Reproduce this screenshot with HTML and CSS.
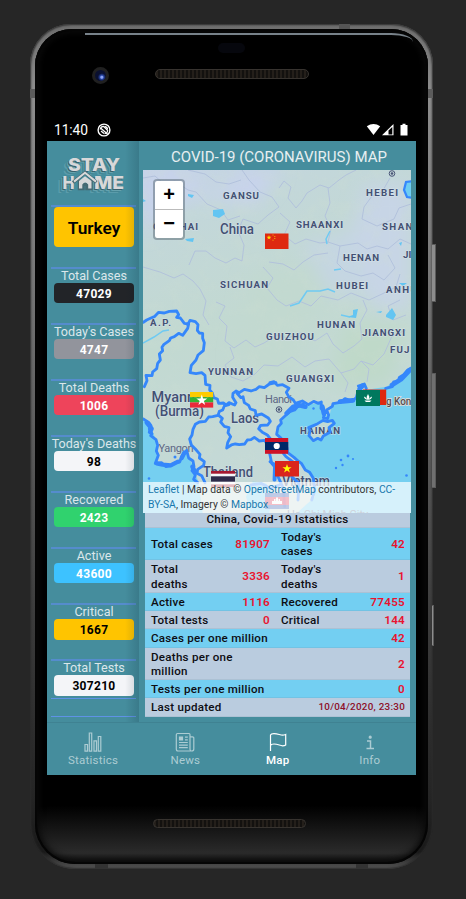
FILE: index.html
```html
<!DOCTYPE html>
<html lang="en">
<head>
<meta charset="utf-8">
<title>Covid-19 Map</title>
<link rel="stylesheet" href="styles.css">
</head>
<body>
<div class="phone">
  <i class="key key-power"></i><i class="key key-volume"></i><i class="key key-low"></i>
  <i class="seam seam-l"></i><i class="seam seam-r"></i><i class="seam seam-t"></i><i class="seam seam-b1"></i><i class="seam seam-b2"></i>
  <div class="body">
    <div class="bezel-top">
      <i class="sensor"></i><i class="camera"></i><i class="speaker"></i>
    </div>
    <div class="status">
      <span class="clock">11:40</span>
      <svg class="s-app" width="14" height="14" viewBox="0 0 14 14"><circle cx="7" cy="7" r="5.900" fill="none" stroke="#fff" stroke-width="1.400"/><path d="M3.200 6.500Q3.500 3.500 6.500 3.300L10.700 7.500Q10.300 10.500 7.500 10.700" fill="none" stroke="#fff" stroke-width="1.200"/><path d="M3.500 5 10.500 11M4 8l3 2.500M7.500 3.500Q10.500 4 10.500 6.500" fill="none" stroke="#fff" stroke-width="1.300"/></svg>
      <svg class="s-right" width="43" height="14" viewBox="0 0 43 14"><path d="M.8 3.200Q7.500-1 14.200 3.200L7.500 12Z" fill="#fff"/><path d="M16 12.300 27.500 1V12.300Z" fill="#fff"/><path d="M22.500 7.500v4h3.800V4z" fill="#000"/><path d="M34.500 2h2V.8h3V2h2v10.500h-7z" fill="#fff"/></svg>
    </div>
    <div class="screen">
      <div class="content">
        <aside class="side">
          <svg class="logo" width="86" height="64" viewBox="51 141 86 64">
            <defs><g id="word">
              <text x="68" y="170.500" textLength="52" lengthAdjust="spacingAndGlyphs">STAY</text>
              <text x="62.500" y="188.500" textLength="12" lengthAdjust="spacingAndGlyphs">H</text>
              <text x="94" y="188.500" textLength="30" lengthAdjust="spacingAndGlyphs">ME</text>
            </g></defs>
            <use href="#word" x="-5" y="4.500" fill="#5a9cab"/>
            <use href="#word" x="-3.500" y="3.200" fill="#438593"/>
            <use href="#word" x="-2" y="2" fill="#65a2ae"/>
            <use href="#word" x="-1" y="1" fill="#38616c"/>
            <use href="#word" fill="#d8d8d9"/>
            <path d="M73 182.500 85 172.700 96.500 182.300M79.500 180V188.500H83V185.500Q85 183 87 185.500V188.500H91V180" fill="none" stroke="#466a73" stroke-width="3.400"/>
            <path d="M74 181.600 85 172.700 96 181.600" fill="none" stroke="#d8d8d9" stroke-width="2"/>
            <path d="M79 181 85 176.300 91.500 181V188.500H88.200V184.500Q85.200 180.500 82.300 184.500V188.500H79Z" fill="#d8d8d9"/>
          </svg>
          <section class="stat stat-main"><b class="pill yellow">Turkey</b></section>
          <section class="stat"><span>Total Cases</span><b class="pill dark">47029</b></section>
          <section class="stat"><span>Today's Cases</span><b class="pill grey">4747</b></section>
          <section class="stat"><span>Total Deaths</span><b class="pill red">1006</b></section>
          <section class="stat"><span>Today's Deaths</span><b class="pill light">98</b></section>
          <section class="stat"><span>Recovered</span><b class="pill green">2423</b></section>
          <section class="stat"><span>Active</span><b class="pill blue">43600</b></section>
          <section class="stat"><span>Critical</span><b class="pill yellow">1667</b></section>
          <section class="stat last"><span>Total Tests</span><b class="pill light">307210</b></section>
          <div class="rule"></div>
          <div class="rule end"></div>
        </aside>
        <main class="main">
          <h1>COVID-19 (CORONAVIRUS) MAP</h1>
          <div class="map">
            <svg class="tiles" width="268" height="343" viewBox="143 170 268 343">
              <defs>
                <linearGradient id="land" x1="0" y1="0" x2=".25" y2="1"><stop offset="0" stop-color="#c6d3e9"/><stop offset=".16" stop-color="#c3d7da"/><stop offset=".5" stop-color="#c2d9d1"/><stop offset="1" stop-color="#c5d9d8"/></linearGradient>
                <filter id="soft" x="-50%" y="-50%" width="200%" height="200%"><feGaussianBlur stdDeviation="9"/></filter>
                <filter id="relief" x="0" y="0" width="100%" height="100%"><feTurbulence type="fractalNoise" baseFrequency=".06" numOctaves="4" seed="8"/><feColorMatrix values="0 0 0 0 .62  0 0 0 0 .73  0 0 0 0 .64  1.5 0 0 0 -.72"/></filter>
              </defs>
              <rect x="143" y="170" width="268" height="343" fill="url(#land)"/>
              <g filter="url(#soft)">
                <path d="M143 170H180L215 195 240 170H280L255 205 190 195 143 235Z" fill="#c8d3ec"/>
                <path d="M365 185H411V310H380L340 275Z" fill="#c7d5e6"/>
                <path d="M300 245 350 230 370 290 335 300Z" fill="#c5d6e2"/>
                <path d="M250 275 320 265 290 400 235 360Z" fill="#c2d9d0"/>
                <path d="M345 325H405L390 385H330Z" fill="#bfd9c9"/>
              </g>
              <rect x="143" y="170" width="268" height="343" filter="url(#relief)" opacity=".4"/>
              <!-- province borders -->
              <g fill="none" stroke="#b0bfdb" stroke-width=".9" stroke-linejoin="round">
                <path d="M143 267 160 272 174 278 183 274 193 281 200 289 206 301 203 315 209 325M189 265 195 251 206 251 215 258 226 263 235 258 242 261 244 245 238 231 243 219 258 224 268 215 279 207 272 197 260 192 249 180 242 170"/>
                <path d="M143 178 155 176 164 184 175 181 188 190 196 192 207 204 221 210 228 220 240 216M188 170 205 174 216 182 229 184 241 180"/>
                <path d="M279 188 284 181 291 187 288 198 296 208 302 201 307 193 320 185 329 188 339 180 346 175 356 170M328 188 330 203 325 216 331 229 328 242 340 246 358 243 367 249 377 246 388 249 400 239 411 244"/>
                <path d="M280 213 290 222 284 235 295 244 306 239 320 243 328 242M269 262 283 264 294 270 303 262 314 255 328 253M340 246 337 263 345 271 361 276 373 273 384 280 395 268 388 255"/>
                <path d="M263 267 273 278 267 288 277 300 286 306 299 301 311 306 321 296 338 300 351 293 369 300 382 294 396 287 400 274"/>
                <path d="M216 302 225 306 219 318 227 326 225 341 234 348 246 340 255 347 264 343 277 335 288 338 301 333 315 341 327 333 333 344 343 353 354 346 362 339 360 323 367 310 363 300"/>
                <path d="M230 347 234 358 225 365 231 377 243 381 255 374 264 365 278 366 292 357 305 367 315 361 329 359 341 373 354 369 361 361 373 365 384 354 392 336 406 330"/>
                <path d="M341 373 348 383 345 392M361 361 369 369 367 382M390 178 382 192 372 196 364 207 362 219 377 226 394 219 399 208 411 204M400 300 388 306 393 320 406 315"/>
              </g>
              <!-- lakes and rivers -->
              <g fill="#63c5f2"><path d="M213 210 223 209 225 214 219 218 213 216Z"/><path d="M188 194 194 195 192 198 188 196ZM185 239 194 238 193 242 187 241ZM143 199 146 201 143 202Z"/><path d="M386 315 392 308 396 315 393 320 386 317ZM353 310 358 309 356 318 347 317 353 315ZM376 312 382 311 381 313ZM399 283 407 283 403 286ZM399 243 402 242 401 246Z"/></g>
              <g fill="none" stroke="#6fcaf2" stroke-width="1.500"><path d="M290 306 299 303 307 291 320 291 328 289 335 292M330 231 326 239 327 244M334 270 341 269M143 343 154 337 163 331 169 330M341 315 350 317"/></g>
              <!-- sea -->
              <g transform="translate(270 310) scale(.33333)">
                <path d="M425 175 395 200 350 230 285 240 255 268 215 275 185 285 178 322 155 305 150 282 100 280 75 295 50 310 35 335 20 375 40 410 65 440 95 465 130 510 135 560 80 610H425Z" fill="#75cff0"/>
                <path d="M145 338 180 335 190 342 175 370 155 388 130 390 118 372 125 350Z" fill="#c2d9d3"/>
              </g>
              <g transform="translate(136 310) scale(.33333)">
                <path d="M20 325 42 345 60 390 64 458 100 468 125 455 150 425 172 470 188 520 200 610H20Z" fill="#75cff0"/>
                <path d="M330 560 350 515 390 520 410 545 400 610H345Z" fill="#75cff0"/>
              </g>
              <path d="M413 181 406 182 404 190 407 197 413 198" fill="#6ecdf2" stroke="#3587fb" stroke-width="2.200"/>
              <!-- place names -->
              <g class="region">
                <text x="223" y="199" textLength="36">GANSU</text><text x="366" y="195.500" textLength="32">HEBEI</text>
                <text x="296" y="228" textLength="47">SHAANXI</text><text x="382" y="229.500" textLength="38">SHANX</text>
                <text x="153" y="229.500" textLength="45">QINGHAI</text><text x="343" y="261" textLength="36">HENAN</text>
                <text x="220" y="288" textLength="48">SICHUAN</text><text x="336" y="289" textLength="32">HUBEI</text>
                <text x="386" y="292.500" textLength="31">ANHU</text><text x="403" y="258">JIA</text>
                <text x="150" y="326" textLength="21">A.P.</text><text x="317" y="327.500" textLength="38">HUNAN</text>
                <text x="362" y="336" textLength="43">JIANGXI</text><text x="266" y="339.500" textLength="48">GUIZHOU</text>
                <text x="390" y="353" textLength="39">FUJIAN</text><text x="208" y="374.500" textLength="45">YUNNAN</text>
                <text x="286" y="382" textLength="48">GUANGXI</text><text x="300" y="433.500" textLength="40">HAINAN</text>
              </g>
              <g class="country">
                <text x="220" y="234" textLength="34" lengthAdjust="spacingAndGlyphs">China</text><text x="151.500" y="401.500" textLength="61" lengthAdjust="spacingAndGlyphs">Myanmar</text>
                <text x="155" y="416" textLength="49" lengthAdjust="spacingAndGlyphs">(Burma)</text><text x="231" y="423" textLength="28" lengthAdjust="spacingAndGlyphs">Laos</text>
                <text x="203" y="477" textLength="50" lengthAdjust="spacingAndGlyphs">Thailand</text><text x="282" y="486" textLength="48" lengthAdjust="spacingAndGlyphs">Vietnam</text>
              </g>
              <g class="town">
                <text x="158.500" y="451.500" textLength="35">Yangon</text><text x="265" y="402.500" textLength="27">Hanoi</text>
                <text class="hk" x="386" y="404.500" textLength="31" lengthAdjust="spacingAndGlyphs">g Kong</text><text x="287" y="518">Ho Chi Minh City</text>
              </g>
              <g fill="none" stroke="#4a5577" stroke-width="1"><circle cx="279" cy="409.500" r="2.800"/><circle cx="392" cy="173.500" r="2.800"/></g>
              <g fill="#4a5577"><circle cx="279" cy="409.500" r="1.300"/><circle cx="392" cy="173.500" r="1.300"/></g>
              <!-- national outlines -->
              <g transform="translate(136 310) scale(.33333)" class="outline">
                <path d="M22 37 32 30 45 24 55 20 68 7 85 9 100 4 122 3 128 14 122 22 133 24 145 40 158 42 155 55 148 65 140 76 128 70 115 80 104 84 100 92 83 104 78 112 80 122 70 132 73 150 65 160 62 176 50 186 48 197 30 196 33 212 25 230"/>
                <path d="M155 44 162 31 178 35 186 44 184 61 190 69 200 70 200 85 205 98 202 122 186 135 180 150 166 166 162 188 180 191 197 188 207 196 209 223 222 226 221 240 229 249 233 263 244 267 248 280 262 279 270 285 279 278 296 285 300 278 290 262 291 250 300 243 310 248 325 238 345 243 360 238 370 230 385 233 400 222 420 218"/>
                <path d="M279 284 265 288 260 300 250 304 246 316 230 320 218 321 208 334 190 336 178 343 171 358 168 375 161 387 166 405 178 417 192 433 190 444 205 455 203 466 185 478 183 490 197 497 207 518"/>
                <path d="M248 316 259 325 254 336 265 349 279 353 276 368 284 380 275 398 272 414 286 405 298 402 310 404 326 402 334 390 345 389 355 382 370 393 386 391 395 405 402 435 407 460 420 475 417 510"/>
                <path d="M303 250 315 263 321 260 325 278 338 286 343 297 358 302 360 316 377 312 397 324 403 334 395 345 374 346 368 356 379 367 394 375 407 391 428 410"/>
                <path d="M22 327 38 337 45 347 40 357 48 371 44 377 60 389 65 406 61 423 67 436 58 460 76 458 90 470 105 467 119 458 131 456 139 436 152 421 158 444 171 453 174 470 168 482 178 495 173 508 185 518"/>
                <path d="M32 338 47 356 42 366M62 460 80 464 104 466 126 455M145 428 137 444M169 470 178 487" stroke-width="13"/>
                <path d="M420 472 426 500 442 535 446 590M345 525 375 520 402 535 430 525" />
              </g>
              <g transform="translate(270 310) scale(.33333)" class="outline">
                <path d="M0 218 12 215 22 226 38 224 57 235 49 247 56 260 70 270 76 280 97 273 115 284 131 274 145 280 154 276 153 295 166 306 160 323 173 326 176 315 170 300 187 289 189 281 211 277 225 266 246 273 259 263 263 247 270 235 265 228 283 222 289 236"/>
                <path d="M347 235 367 230 371 216 386 214 388 202 401 194 413 180 426 173"/>
                <path d="M100 282 83 290 74 300 59 305 49 314 32 330 34 340 24 351 20 373 33 384 35 398 51 413 53 428 72 442 84 453 94 460 106 480 119 487 130 505 134 543 125 570"/>
                <path d="M143 341 159 331 173 335 187 331 193 340 177 353 180 367 160 378 153 390 143 385 130 392 117 377 120 362 116 353 132 346Z"/>
                <path d="M50 310 70 290 88 286 106 290M157 290 162 311M210 275 249 271M366 225 393 208 419 181M269 237 278 227" stroke-width="14"/>
                <path d="M0 455 14 463 13 482 12 510M40 430 48 440 75 460M65 500 87 520 84 570" />
              </g>
              <g fill="#3587fb"><circle cx="348" cy="456" r="1.400"/><circle cx="353" cy="459" r="1.100"/><circle cx="341" cy="460" r="1.300"/><circle cx="342.500" cy="465" r="1.200"/><circle cx="336" cy="468" r="1.200"/><circle cx="406.500" cy="475.500" r="1.300"/><circle cx="313.500" cy="408.500" r="1.200"/><circle cx="149" cy="478.500" r="1.300"/><circle cx="175" cy="457" r="1.500"/></g>
              <!-- flags -->
              <g transform="translate(265 233.500)"><path fill="#de2910" d="M0 0h23.500v15.500H0z"/><path fill="#ffde00" d="m4 1.500.6 1.700 1.800.1-1.400 1.100.5 1.700L4 5.100 2.500 6.100 3 4.400 1.600 3.300l1.800-.1z"/><path d="M7.500 1.500h1M9.300 3h1M9.300 5h1M7.500 6.700h1" stroke="#ffde00" stroke-width=".8"/></g>
              <g transform="translate(190 392)"><path fill="#fecb00" d="M0 0h23.200v5.200H0z"/><path fill="#34b233" d="M0 5.200h23.200v5.200H0z"/><path fill="#ea2839" d="M0 10.400h23.200v5.200H0z"/><path fill="#fff" d="m11.800 2.500 1.300 4h4.200l-3.400 2.500 1.300 4-3.400-2.500-3.400 2.500 1.300-4-3.400-2.500h4.200z"/></g>
              <g transform="translate(265 438)"><path fill="#ce1126" d="M0 0h23.200v15.800H0z"/><path fill="#002868" d="M0 4h23.200v8H0z"/><circle cx="11.700" cy="8" r="3.100" fill="#fff"/></g>
              <g transform="translate(275 461)"><path fill="#da251d" d="M0 0h24v15.500H0z"/><path fill="#ff0" d="m12 3 1.100 3.300h3.500l-2.800 2 1.100 3.300L12 9.600l-2.900 2 1.100-3.300-2.800-2h3.500z"/></g>
              <path fill="#de2910" d="M363 389.500h23.200v15.500H363z"/>
              <g transform="translate(356 390)"><path fill="#00785e" d="M0 0h24v16H0z"/><path fill="#fff" d="M12 4Q14 6.500 12.800 9 15 6.500 16 6.500 16 9.500 12 9.800 8 9.500 8 6.500 9.300 6.700 11.200 9 10 6.500 12 4M8.500 10.500h7L14 12h-4z"/></g>
              <g transform="translate(211 471)"><path fill="#a51931" d="M0 0h24v16H0z"/><path fill="#f4f5f8" d="M0 2.700h24v10.600H0z"/><path fill="#2d2a4a" d="M0 5.300h24v5.400H0z"/></g>
              <g transform="translate(265 493)" opacity=".8"><path fill="#032ea1" d="M0 0h24v16H0z"/><path fill="#e00025" d="M0 4h24v8H0z"/><path fill="#fff" d="M7 11V8h2V6h1.500v2H11V4.500h2V8h.5V6H15v2h2v3z"/></g>
            </svg>
            <div class="zoom"><span>+</span><span>−</span></div>
            <div class="credit"><a>Leaflet</a> | Map data © <a>OpenStreetMap</a> contributors, <a>CC-<br>BY-SA</a>, Imagery © <a>Mapbox</a></div>
          </div>
          <table class="data">
            <colgroup><col class="c1"><col class="c2"><col class="c3"><col class="c4"></colgroup>
            <tr class="head"><th colspan="4">China, Covid-19 Istatistics</th></tr>
            <tr class="tall on"><th>Total cases</th><td>81907</td><th>Today's<br>cases</th><td>42</td></tr>
            <tr class="tall"><th>Total<br>deaths</th><td>3336</td><th>Today's<br>deaths</th><td>1</td></tr>
            <tr class="on"><th>Active</th><td>1116</td><th>Recovered</th><td>77455</td></tr>
            <tr><th>Total tests</th><td>0</td><th>Critical</th><td>144</td></tr>
            <tr class="on"><th colspan="2">Cases per one million</th><td colspan="2">42</td></tr>
            <tr class="tall"><th colspan="2">Deaths per one<br>million</th><td colspan="2">2</td></tr>
            <tr class="on"><th colspan="2">Tests per one million</th><td colspan="2">0</td></tr>
            <tr><th colspan="2">Last updated</th><td class="date" colspan="2">10/04/2020, 23:30</td></tr>
          </table>
        </main>
      </div>
      <nav class="tabs">
        <div class="tab"><svg width="20" height="20" viewBox="0 0 20 20"><path d="M2 12.500h2.500v6.700H2zM6.300 1h2.400v18.200H6.300zM11 8.800h2.500v10.400H11zM15.300 4.500h2.500v14.700h-2.500z"/></svg><span>Statistics</span></div>
        <div class="tab"><svg width="20" height="20" viewBox="0 0 20 20"><path d="M16.500 19H3Q1.300 19 1.300 17V2.700Q1.300 1.500 2.500 1.500H14Q15 1.500 15 2.700V17.500Q15.200 19 16.700 19 18.800 19 18.800 17V6Q18.800 4.800 17.500 4.800H15M10 5.200h2.800M10 7.800h2.800M4 10.500h8.800M4 13.100h8.800M4 15.700h8.800"/><path class="fill" d="M4.500 5h3v3h-3z"/></svg><span>News</span></div>
        <div class="tab active"><svg width="20" height="20" viewBox="0 0 20 20"><path d="M2.500 19V3Q3 1.600 6 1.600C10 1.600 12 3.200 14.500 3.200Q16 3.200 17.700 2.500V13Q16.500 13.800 14.500 13.800C12 13.800 10 12 6 12Q3 12 2.500 13.500"/></svg><span>Map</span></div>
        <div class="tab"><svg width="20" height="20" viewBox="0 0 20 20"><path d="M7 9h3.500v7.500M6.500 16.500H14" stroke-width="1.500"/><circle class="fill" cx="10.200" cy="5.200" r="1"/></svg><span>Info</span></div>
      </nav>
    </div>
    <div class="bezel-bottom"><i class="speaker"></i></div>
  </div>
</div>
</body>
</html>
```
FILE: styles.css
```css
* { box-sizing: border-box; }
body {
  margin: 0;
  width: 466px;
  height: 899px;
  padding: 24px 33px 30px 30px;
  background: #262626;
  font-family: Roboto, "Liberation Sans", sans-serif;
  overflow: hidden;
}
.phone {
  position: relative;
  width: 403px;
  height: 845px;
  padding: 5px;
  border-radius: 41px 41px 45px 45px;
  background: linear-gradient(#6d6d6d, #8f8f8f 8%, #7c7c7c 26%, #626262 45%, #3c3c3c 70%, #242424 92%, #1a1a1a 98%, #555);
  box-shadow: inset 0 0 2px 1px #2b2b2b;
}
.body {
  width: 393px;
  height: 835px;
  padding: 0 12px;
  border-radius: 37px 37px 40px 40px;
  background: linear-gradient(#000 93%, #131313 95.500%, #2b2b2b 98.700%, #0c0c0c);
  box-shadow: inset 0 0 0 2px #050505, inset 0 0 6px 4px #0a0a0a;
}
.key {
  position: absolute;
  left: 402px;
  width: 4px;
  border: 1px solid #5b5b5b;
  border-left: 0;
  background: #8d8d8d;
}
.key-power { top: 220px; height: 58px; }
.key-volume { top: 349px; height: 115px; background: #707070; }
.key-low { top: 581px; height: 41px; width: 2px; }
.seam { position: absolute; background: #5c5c5c; }
.seam-l { left: 0; top: 65px; width: 5px; height: 9px; }
.seam-r { right: 0; top: 65px; width: 5px; height: 9px; }
.seam-t { left: 309px; top: 0; width: 11px; height: 5px; background: #555; }
.seam-b1 { left: 65px; bottom: 0; width: 13px; height: 5px; background: #333; }
.seam-b2 { left: 326px; bottom: 0; width: 12px; height: 5px; background: #333; }
.bezel-top {
  position: relative;
  height: 89px;
}
.bezel-top::before {
  content: "";
  position: absolute;
  left: 38px;
  right: 3px;
  top: 4px;
  height: 9px;
  border-top: 2px solid #78828a;
  border-radius: 0 22px 0 0 / 0 9px 0 0;
}
.sensor {
  position: absolute;
  left: 171px;
  top: 14px;
  width: 27px;
  height: 10px;
  border-radius: 5px;
  background: #06070d;
}
.camera {
  position: absolute;
  left: 45px;
  top: 38px;
  width: 17px;
  height: 17px;
  border-radius: 50%;
  border: 3px solid #202020;
  background: radial-gradient(circle at 62% 66%, #8ba3f6 0 1px, #2744a3 2px, #0a1030 4px);
}
.speaker {
  display: block;
  height: 9px;
  border-radius: 5px;
  border: 1px solid #37332f;
  background: repeating-linear-gradient(90deg, #241f1a 0 2px, #13110f 2px 4px);
}
.bezel-top .speaker {
  position: absolute;
  left: 108px;
  top: 40px;
  width: 154px;
  height: 10px;
}
.status {
  height: 23px;
  display: flex;
  align-items: center;
  padding: 1px 7px 0 8px;
  color: #fff;
}
.clock { font-size: 13.800px; width: 34px; margin-left: -1px; letter-spacing: -.1px; }
.s-app { margin-left: 9px; }
.s-right { margin-left: auto; }
.screen {
  width: 369px;
  height: 634px;
  background: #458d9d;
  display: flex;
  flex-direction: column;
}
.content { display: flex; height: 581px; }
.side {
  width: 92px;
  padding: 0 3px 0 4px;
  position: relative;
}
.side::after {
  content: "";
  position: absolute;
  inset: 0 0 0 auto;
  width: 14px;
  background: linear-gradient(90deg, transparent, rgba(0, 25, 40, .16));
}
.logo {
  display: block;
  height: 64px;
  font: 800 17.500px Inter, "Open Sans", sans-serif;
}
.stat {
  height: 56.100px;
  border-top: 2px solid #558ccd;
  padding: 0 2px 0 3px;
  text-align: center;
  color: #dbe7eb;
}
.stat span {
  display: block;
  margin: 0 -6px;
  height: 14px;
  font-size: 12.600px;
  line-height: 13px;
  white-space: nowrap;
}
.pill {
  display: block;
  height: 20.500px;
  border-radius: 4px;
  font: 700 12px/22px Roboto, sans-serif;
  letter-spacing: .3px;
  color: #fff;
}
.stat-main { height: 61.500px; }
.stat-main .pill { height: 40px; font: 600 17.300px/43px Roboto, sans-serif; letter-spacing: 0; }
.last { height: 39px; }
.rule { height: 18px; border-top: 1px solid #5f92e6; }
.rule.end { height: 5px; }
.yellow { background: #ffc400; color: #000; }
.dark { background: #222428; }
.grey { background: #92949c; }
.red { background: #ee445b; }
.light { background: #f4f5f8; color: #000; }
.green { background: #30d26e; }
.blue { background: #3dc2ff; }
.main { width: 277px; padding: 0 5px 0 4px; }
h1 {
  margin: 0;
  height: 29px;
  padding-left: 4px;
  text-align: center;
  font-size: 15px;
  font-weight: 400;
  line-height: 33px;
  color: #e7eff1;
  white-space: nowrap;
}
.map { position: relative; width: 268px; height: 343px; }
.tiles { display: block; }
.region {
  font: 700 9.700px Roboto, sans-serif;
  fill: #435073;
  stroke: #d5e2e8;
  stroke-width: 1px;
  paint-order: stroke;
}
.country {
  font: 500 14px Roboto, sans-serif;
  fill: #435073;
  stroke: #d5e2e8;
  stroke-width: 1px;
  paint-order: stroke;
}
.town { font: 400 11px Roboto, sans-serif; fill: #5e6885; }
.hk { font-weight: 500; fill: #504f55; stroke: #e6ded6; stroke-width: 1.500px; paint-order: stroke; }
.outline { fill: none; stroke: #3587fb; stroke-width: 8.500px; stroke-linejoin: round; stroke-linecap: round; }
.zoom {
  position: absolute;
  left: 10px;
  top: 9px;
  width: 32px;
  height: 61px;
  border: 2px solid rgba(90, 105, 115, .5);
  border-radius: 4px;
  background: #fff;
  background-clip: padding-box;
}
.zoom span {
  display: block;
  height: 28px;
  text-align: center;
  font: 700 20px/27px "Liberation Sans", sans-serif;
}
.zoom span + span { border-top: 1px solid #bbb; line-height: 26px; }
.credit {
  position: absolute;
  left: 0;
  bottom: 0;
  width: 268px;
  height: 31px;
  padding-left: 5px;
  background: rgba(255, 255, 255, .7);
  font-size: 10.350px;
  line-height: 15.400px;
  color: #333;
  white-space: nowrap;
}
.credit a { color: #1778ad; }
.data {
  width: 265px;
  margin-left: 2px;
  table-layout: fixed;
  border-collapse: collapse;
  background: #baccdf;
  font-size: 11.600px;
  line-height: 14.300px;
  letter-spacing: .25px;
}
.c1 { width: 76px; }
.c2 { width: 54px; }
.c3 { width: 86px; }
.c4 { width: 49px; }
.data tr { height: 18.300px; }
.data tr.tall { height: 32.400px; }
.data tr.head { height: 15px; }
.data .on { background: #73cff2; }
.data th, .data td {
  padding: 0 5px 0 6px;
  font-weight: 500;
  box-shadow: inset 0 -1px 0 rgba(110, 145, 165, .18);
}
.data th { text-align: left; color: #0d0d12; }
.data .head th { text-align: center; line-height: 13px; padding: 0 5px 2px; }
.data td { text-align: right; color: #e9132f; font-size: 11.700px; font-weight: 600; }
.data td.date { color: #8e1029; font-size: 9.900px; font-weight: 500; }
.tabs {
  height: 53px;
  display: flex;
  border-top: 1px solid #3f8292;
}
.tab {
  flex: 1;
  display: flex;
  flex-direction: column;
  align-items: center;
  padding-top: 9px;
  font-size: 11.500px;
  line-height: 17px;
  letter-spacing: .25px;
  color: #acccd3;
}
.tab svg { fill: none; stroke: currentColor; stroke-width: 1.200; }
.tab .fill { fill: currentColor; }
.tab.active { color: #fff; font-weight: 500; }
.bezel-bottom { padding: 44px 0 0 106px; }
.bezel-bottom .speaker { width: 153px; }
```
